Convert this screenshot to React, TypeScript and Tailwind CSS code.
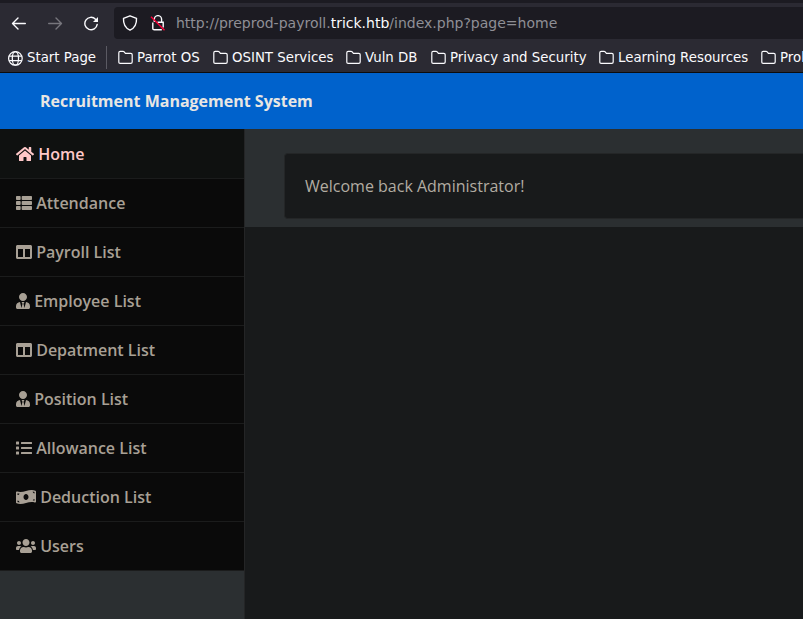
import React from 'react';
import { FaHome, FaThList, FaColumns, FaUserTie, FaList, FaMoneyBillWave, FaUsers } from 'react-icons/fa';

const bookmarks = [
  { label: 'Parrot OS', width: 'w-[95px]' },
  { label: 'OSINT Services', width: 'w-[133px]' },
  { label: 'Vuln DB', width: 'w-[85px]' },
  { label: 'Privacy and Security', width: 'w-[168px]' },
  { label: 'Learning Resources', width: 'w-[162px]' },
  { label: 'Prob', width: 'w-[60px]' },
];

const items = [
  { label: 'Home', icon: FaHome, size: 'w-[18px]' },
  { label: 'Attendance', icon: FaThList, size: 'w-4' },
  { label: 'Payroll List', icon: FaColumns, size: 'w-4' },
  { label: 'Employee List', icon: FaUserTie, size: 'w-3.5' },
  { label: 'Depatment List', icon: FaColumns, size: 'w-4' },
  { label: 'Position List', icon: FaUserTie, size: 'w-3.5' },
  { label: 'Allowance List', icon: FaList, size: 'w-4' },
  { label: 'Deduction List', icon: FaMoneyBillWave, size: 'w-5' },
  { label: 'Users', icon: FaUsers, size: 'w-5' },
];

function Folder() {
  return (
    <svg className="h-4 w-4 shrink-0" viewBox="0 0 16 16" fill="none" stroke="#fbfbfe" strokeWidth="1.2">
      <path d="M.8 13.2V3.7Q.8 2.3 2.2 2.3H5Q5.7 2.3 6.2 2.9L7.4 4.3H12.8Q14.2 4.3 14.2 5.7V13Q14.2 14.3 12.8 14.3H2.1Q.8 14.3 .8 13.2Z" />
    </svg>
  );
}

function Toolbar() {
  return (
    <div className="flex h-[36px] items-center">
      <svg className="ml-[11px] h-4 w-4 shrink-0" viewBox="0 0 16 16" fill="none" stroke="#fbfbfe" strokeWidth="1.4" strokeLinecap="round" strokeLinejoin="round">
        <path d="M14.3 8.5H1.5M7 3L1.5 8.5L7 14" />
      </svg>
      <svg className="ml-5 h-4 w-4 shrink-0" viewBox="0 0 16 16" fill="none" stroke="#77767d" strokeWidth="1.4" strokeLinecap="round" strokeLinejoin="round">
        <path d="M1.7 8.5H14.5M9 3L14.5 8.5L9 14" />
      </svg>
      <svg className="ml-5 h-4 w-4 shrink-0" viewBox="0 0 16 16" fill="none" stroke="#fbfbfe" strokeWidth="1.4" strokeLinecap="round">
        <path d="M12.5 4.2A6.2 6.2 0 1 0 14.2 9.4" />
        <path d="M15 2V7H10Z" fill="#fbfbfe" stroke="none" />
      </svg>
      <div className="ml-[15px] flex h-8 flex-1 items-center rounded-l bg-[#1c1b22] pl-2">
        <svg className="h-4 w-4 shrink-0" viewBox="0 0 16 16" fill="none" stroke="#fbfbfe" strokeWidth="1.4" strokeLinejoin="round">
          <path d="M8 .8L14.5 3.4C14.8 9 12 13.4 8 15.2C4 13.4 1.2 9 1.5 3.4Z" />
        </svg>
        <svg className="ml-3 h-4 w-4 shrink-0" viewBox="0 0 16 16" fill="none" stroke="#fbfbfe" strokeWidth="1.4">
          <path d="M4.3 7V4.3A3.6 3.6 0 0 1 11.6 4.3V7M7.5 7.3H13.2V12.6M11.8 14.8H4.3Q2.8 14.8 2.8 13.5V7.5" />
          <path d="M1 1.7L14.5 15.2" stroke="#ff0039" />
        </svg>
        <span className="ml-2.5 whitespace-nowrap text-[14px] text-[#8f8f96]">
          http://preprod-payroll.<span className="text-[#fbfbfe]">trick.htb</span>/index.php?page=home
        </span>
      </div>
    </div>
  );
}

export default function App() {
  return (
    <div className="flex h-[619px] w-[803px] flex-col overflow-hidden bg-[#181a1b] font-['Open_Sans',sans-serif]">
      <div className="h-[73px] shrink-0 border-b border-[#0c0c0d] bg-[#2b2a33] font-['DejaVu_Sans',sans-serif]">
        <div className="h-[3px] bg-[#1c1b22]" />
        <div className="pt-[2px]">
          <Toolbar />
        </div>
        <div className="flex h-[31px] items-center overflow-hidden pt-px text-[13.333px] whitespace-nowrap text-[#fbfbfe]">
          <div className="ml-[7px] flex w-[99px] shrink-0 items-center gap-1">
            <svg className="mt-[2px] h-4 w-4 shrink-0" viewBox="0 0 16 16" fill="none" stroke="#fbfbfe" strokeWidth="1.25">
              <circle cx="8.4" cy="8.4" r="6.8" />
              <ellipse cx="8.4" cy="8.4" rx="3.1" ry="6.8" />
              <path d="M2.1 6.1H14.7M2.1 10.7H14.7" />
            </svg>
            <span className="pt-[2px]">Start Page</span>
          </div>
          <div className="mr-[11px] h-[23px] w-px shrink-0 bg-[#5b5a63]" />
          {bookmarks.map((b) => (
            <div key={b.label} className={`flex shrink-0 items-center gap-[3px] ${b.width}`}>
              <Folder />
              <span className="pt-[2px]">{b.label}</span>
            </div>
          ))}
        </div>
      </div>
      <header className="flex h-14 shrink-0 items-center bg-[#0062cc] pl-10 text-base font-bold text-[#e8e6e3]">
        Recruitment Management System
      </header>
      <div className="flex min-h-0 flex-1">
        <nav className="w-[245px] shrink-0 border-r border-[#242526] bg-[#2b2f31]">
          {items.map(({ label, icon: Icon, size }, i) => (
            <div
              key={label}
              className={`flex items-center gap-[4.16px] border-b border-[#1b1c1c] px-4 text-base font-semibold ${
                i === 0 ? 'h-[50px] bg-[#0f1110] text-[#ffc8c8]' : 'h-[49px] bg-[#0a0a0a] text-[#a8a095]'
              }`}
            >
              <Icon className={`h-4 shrink-0 ${size}`} />
              {label}
            </div>
          ))}
        </nav>
        <main className="min-w-0 flex-1">
          <div className="h-[98px] bg-[#2b2f31] pt-6 pl-[39px]">
            <div className="flex h-[66px] items-center rounded-l border border-r-0 border-[#242627] bg-[#181a1b] pl-5 text-base text-[#b2aca2]">
              Welcome back Administrator!
            </div>
          </div>
        </main>
      </div>
    </div>
  );
}
